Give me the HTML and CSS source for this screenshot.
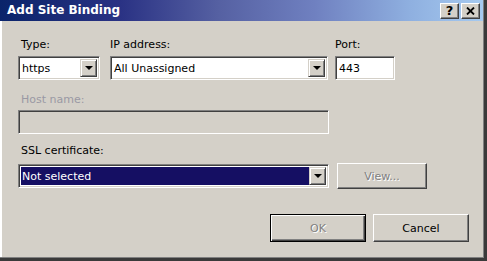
FILE: index.html
```html
<!DOCTYPE html>
<html lang="en">
<head>
    <meta charset="UTF-8">
    <title>Add Site Binding</title>
    <link rel="stylesheet" href="styles.css">
</head>
<body>
    <div class="window">
        <div class="frame">
            <div class="titlebar">
                <span class="title">Add Site Binding</span>
                <div class="caption-buttons">
                    <span class="cap-btn help">?</span>
                    <span class="cap-btn close">
                        <svg width="9" height="8" viewBox="0 0 9 8">
                            <path d="M1 0.5 L8 7.5 M8 0.5 L1 7.5" stroke="#000" stroke-width="1.8" fill="none"/>
                        </svg>
                    </span>
                </div>
            </div>

            <div class="content">
                <div class="row">
                    <div class="field field-type">
                        <span class="label indent">Type:</span>
                        <div class="select">
                            <span class="select-text">https</span>
                            <span class="drop-btn"><span class="arrow"></span></span>
                        </div>
                    </div>
                    <div class="field field-ip">
                        <span class="label">IP address:</span>
                        <div class="select">
                            <span class="select-text">All Unassigned</span>
                            <span class="drop-btn"><span class="arrow"></span></span>
                        </div>
                    </div>
                    <div class="field field-port">
                        <span class="label">Port:</span>
                        <div class="textbox">443</div>
                    </div>
                </div>

                <div class="field field-host">
                    <span class="label indent disabled">Host name:</span>
                    <div class="textbox textbox-disabled"></div>
                </div>

                <div class="field field-ssl">
                    <span class="label indent">SSL certificate:</span>
                    <div class="ssl-row">
                        <div class="select select-ssl">
                            <span class="select-text selected">Not selected</span>
                            <span class="drop-btn"><span class="arrow"></span></span>
                        </div>
                        <span class="button button-view disabled-text">View...</span>
                    </div>
                </div>

                <div class="actions">
                    <span class="button button-default disabled-text">OK</span>
                    <span class="button">Cancel</span>
                </div>
            </div>
        </div>
    </div>
</body>
</html>
```

FILE: styles.css
```css
body {
    margin: 0;
    padding: 0;
    background: #3a3a3a;
    font-family: "DejaVu Sans", Verdana, sans-serif;
    font-size: 11px;
    color: #000;
}

.window {
    box-sizing: border-box;
    width: 487px;
    height: 261px;
    border-right: 3px solid #3a3a3a;
    border-bottom: 3px solid #3a3a3a;
    background: #d4d0c8;
}

.frame {
    box-sizing: border-box;
    height: 100%;
    display: flex;
    flex-direction: column;
    border-right: 1px solid #808080;
    border-bottom: 1px solid #808080;
}

.titlebar {
    height: 21px;
    flex: none;
    display: flex;
    align-items: center;
    justify-content: space-between;
    padding: 0 3px 0 7px;
    background: linear-gradient(to right, #0a246a 0%, #2a3284 25%, #5560a2 45%, #6f80c0 65%, #8fb0e0 85%, #a6caf0 100%);
}

.title {
    color: #fff;
    font-weight: bold;
    font-size: 12px;
    line-height: 21px;
}

.caption-buttons {
    display: flex;
    gap: 2px;
    margin-top: 1px;
}

.cap-btn {
    box-sizing: border-box;
    width: 19px;
    height: 16px;
    display: flex;
    align-items: center;
    justify-content: center;
    background: #d4d0c8;
    border-top: 1px solid #fff;
    border-left: 1px solid #fff;
    border-right: 1px solid #404040;
    border-bottom: 1px solid #404040;
    box-shadow: inset -1px -1px #808080;
}

.help {
    font-weight: bold;
    font-size: 13px;
    line-height: 14px;
    padding-bottom: 1px;
}

.content {
    flex: 1;
    box-sizing: border-box;
    border-left: 2px solid #fff;
    padding: 17px 14px 0 16px;
    display: flex;
    flex-direction: column;
}

.row {
    display: flex;
}

.field {
    display: flex;
    flex-direction: column;
}

.label {
    line-height: 13px;
    margin-bottom: 5px;
}

.indent {
    padding-left: 3px;
}

.disabled {
    color: #9a99a4;
}

.field-type { width: 82px; margin-right: 10px; }
.field-ip { width: 218px; margin-right: 7px; }
.field-port { width: 60px; }

.field-host {
    width: 311px;
    margin-top: 13px;
}

.field-host .label { margin-bottom: 4px; }

.field-ssl {
    margin-top: 10px;
}

.field-ssl .label { margin-bottom: 6px; }

.select,
.textbox {
    box-sizing: border-box;
    height: 24px;
    display: flex;
    align-items: center;
    background: #fff;
    border-top: 1px solid #808080;
    border-left: 1px solid #808080;
    border-right: 1px solid #fff;
    border-bottom: 1px solid #fff;
    box-shadow: inset 1px 1px #404040, inset -1px -1px #d4d0c8;
    padding: 2px;
}

.textbox {
    padding-left: 3px;
}

.textbox-disabled {
    background: #d4d0c8;
}

.select-text {
    flex: 1;
    align-self: stretch;
    display: flex;
    align-items: center;
    padding-left: 1px;
    white-space: nowrap;
    overflow: hidden;
}

.select-text.selected {
    background: #150f63;
    color: #fff;
}

.drop-btn {
    box-sizing: border-box;
    width: 17px;
    align-self: stretch;
    display: flex;
    align-items: center;
    justify-content: center;
    background: #d4d0c8;
    border-top: 1px solid #d4d0c8;
    border-left: 1px solid #d4d0c8;
    border-right: 1px solid #404040;
    border-bottom: 1px solid #404040;
    box-shadow: inset 1px 1px #fff, inset -1px -1px #808080;
}

.arrow {
    width: 0;
    height: 0;
    border-left: 4px solid transparent;
    border-right: 4px solid transparent;
    border-top: 4px solid #000;
}

.ssl-row {
    display: flex;
    align-items: center;
    gap: 8px;
}

.select-ssl {
    width: 311px;
}

.button {
    box-sizing: border-box;
    width: 96px;
    height: 28px;
    display: flex;
    align-items: center;
    justify-content: center;
    background: #d4d0c8;
    border-top: 1px solid #fff;
    border-left: 1px solid #fff;
    border-right: 1px solid #404040;
    border-bottom: 1px solid #404040;
    box-shadow: inset -1px -1px #808080;
}

.button-view {
    width: 90px;
    height: 26px;
}

.button-default {
    border: 1px solid #000;
    box-shadow: inset 1px 1px #fff, inset -1px -1px #404040, inset -2px -2px #808080;
}

.disabled-text {
    color: #808080;
    text-shadow: 1px 1px #fff;
}

.actions {
    display: flex;
    justify-content: flex-end;
    gap: 7px;
    margin-top: 25px;
}
```
